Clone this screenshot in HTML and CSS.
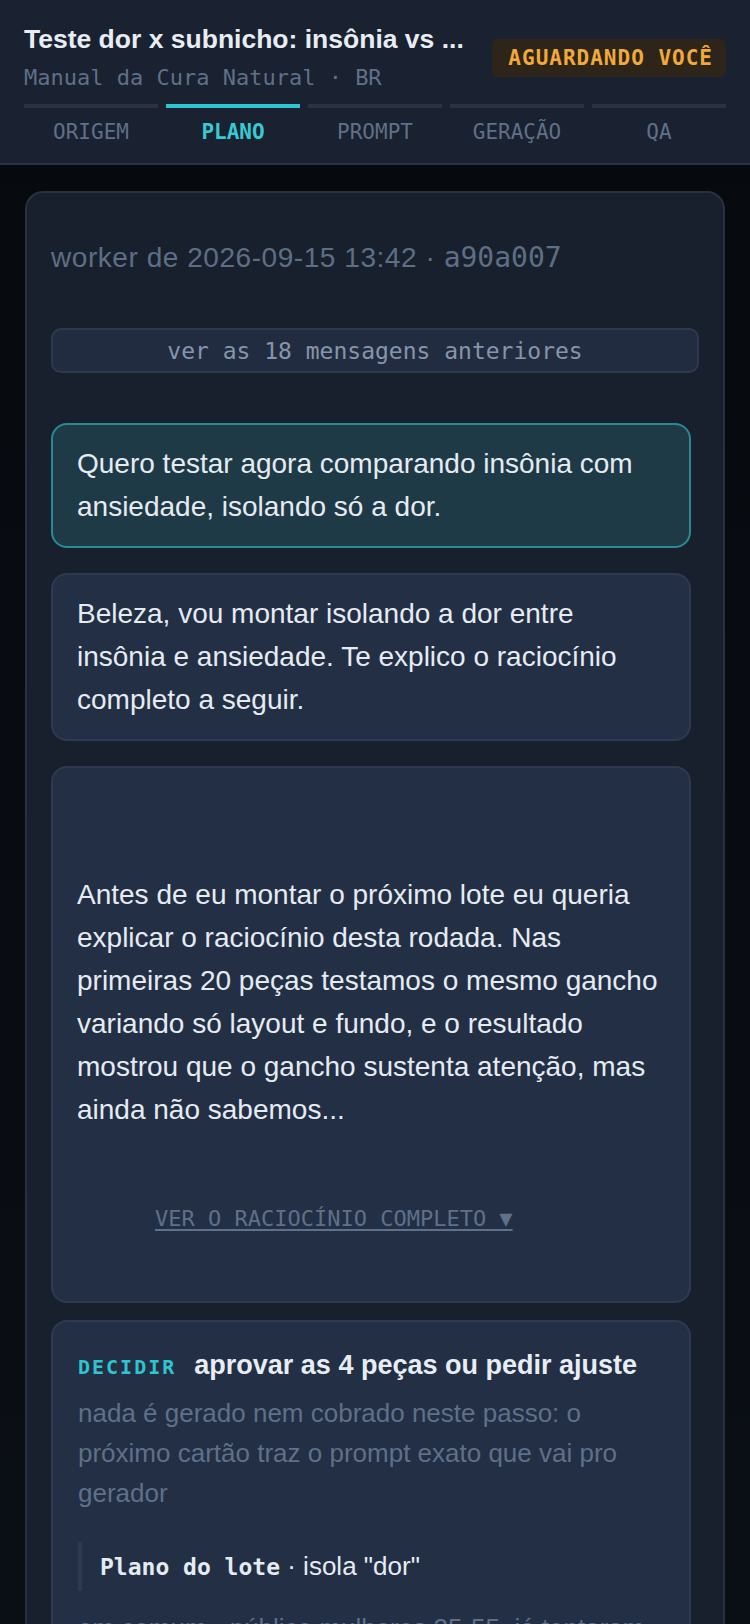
FILE: index.html
```html
<!DOCTYPE html>
<html lang="pt-BR">
<head>
  <meta charset="UTF-8">
  <title>Teste dor x subnicho</title>
  <link rel="stylesheet" href="styles.css">
</head>
<body>
  <header class="topbar">
    <div class="topbar-row">
      <div class="topbar-info">
        <h1 class="title">Teste dor x subnicho: insônia vs ...</h1>
        <div class="subtitle">Manual da Cura Natural · BR</div>
      </div>
      <span class="badge">AGUARDANDO VOCÊ</span>
    </div>
    <nav class="steps">
      <div class="step">
        <span class="step-bar"></span>
        <span class="step-label">ORIGEM</span>
      </div>
      <div class="step active">
        <span class="step-bar"></span>
        <span class="step-label">PLANO</span>
      </div>
      <div class="step">
        <span class="step-bar"></span>
        <span class="step-label">PROMPT</span>
      </div>
      <div class="step">
        <span class="step-bar"></span>
        <span class="step-label">GERAÇÃO</span>
      </div>
      <div class="step">
        <span class="step-bar"></span>
        <span class="step-label">QA</span>
      </div>
    </nav>
  </header>

  <main class="thread">
    <div class="thread-meta">worker de 2026-09-15 13:42 · <span class="mono">a90a007</span></div>

    <button class="older">ver as 18 mensagens anteriores</button>

    <div class="msg msg-user">
      Quero testar agora comparando insônia com ansiedade, isolando só a dor.
    </div>

    <div class="msg msg-bot">
      Beleza, vou montar isolando a dor entre insônia e ansiedade. Te explico o raciocínio completo a seguir.
    </div>

    <div class="msg msg-bot msg-long">
      <p>Antes de eu montar o próximo lote eu queria explicar o raciocínio desta rodada. Nas primeiras 20 peças testamos o mesmo gancho variando só layout e fundo, e o resultado mostrou que o gancho sustenta atenção, mas ainda não sabemos...</p>
      <a class="more" href="#">VER O RACIOCÍNIO COMPLETO ▼</a>
    </div>

    <div class="msg msg-bot msg-decide">
      <div class="decide-head">
        <span class="decide-tag">DECIDIR</span>
        <span class="decide-title">aprovar as 4 peças ou pedir ajuste</span>
      </div>
      <p class="decide-note">nada é gerado nem cobrado neste passo: o próximo cartão traz o prompt exato que vai pro gerador</p>
      <div class="plan">
        <strong class="mono">Plano do lote</strong> · isola "dor"
      </div>
      <p class="decide-note decide-more">em comum · público mulheres 35-55, já tentaram chá e remédio, linguagem simples</p>
    </div>
  </main>
</body>
</html>
```

FILE: styles.css
```css
body {
  margin: 0;
  background: linear-gradient(#06090e, #0b0f16);
  font-family: "Liberation Sans", Arial, sans-serif;
  color: #e6ebf2;
  min-height: 1624px;
}

.mono {
  font-family: "DejaVu Sans Mono", "Liberation Mono", monospace;
  letter-spacing: 0;
}

/* top bar */
.topbar {
  background-color: #1a2130;
  border-bottom: 2px solid #2b3340;
  padding: 23px 24px 16px;
}

.topbar-row {
  display: flex;
  align-items: center;
  justify-content: space-between;
  gap: 16px;
}

.title {
  margin: 0;
  font-size: 26.5px;
  line-height: 32px;
  font-weight: bold;
  color: #e8edf4;
  white-space: nowrap;
}

.subtitle {
  margin-top: 8px;
  font-family: "DejaVu Sans Mono", monospace;
  font-size: 22px;
  line-height: 30px;
  color: #5f7088;
}

.badge {
  flex-shrink: 0;
  background-color: #2d2519;
  color: #f2a93b;
  font-family: "DejaVu Sans Mono", monospace;
  font-weight: bold;
  font-size: 21px;
  letter-spacing: 1px;
  line-height: 38px;
  padding: 0 13px 0 16px;
  border-radius: 6px;
}

.steps {
  display: grid;
  grid-template-columns: repeat(5, 1fr);
  gap: 8px;
  margin-top: 11px;
}

.step {
  display: flex;
  flex-direction: column;
  align-items: center;
}

.step-bar {
  display: block;
  width: 100%;
  height: 4px;
  background-color: #2a3342;
}

.step-label {
  margin-top: 9px;
  font-family: "DejaVu Sans Mono", monospace;
  font-size: 21px;
  line-height: 30px;
  color: #5f7088;
}

.step.active .step-bar {
  background-color: #2ec4d0;
}

.step.active .step-label {
  color: #38c9d3;
  font-weight: bold;
}

/* conversation card */
.thread {
  margin: 26px 25px 0;
  background-color: #19202d;
  border: 2px solid #29313f;
  border-bottom: none;
  border-radius: 18px 18px 0 0;
  padding: 45px 24px 40px;
}

.thread-meta {
  font-size: 28px;
  line-height: 40px;
  letter-spacing: 0.55px;
  color: #5d6e86;
}

.older {
  display: block;
  width: 100%;
  margin-top: 50px;
  height: 45px;
  background-color: #222c40;
  border: 2px solid #2e394d;
  border-radius: 10px;
  color: #8595ab;
  font-family: "DejaVu Sans Mono", monospace;
  font-size: 23px;
  cursor: pointer;
}

.msg {
  margin-right: 8px;
  padding: 17px 24px 18px;
  border-radius: 16px;
  font-size: 28px;
  line-height: 43px;
  color: #e6ebf2;
}

.msg-user {
  margin-top: 50px;
  background-color: #1e3a47;
  border: 2px solid #2a8a93;
}

.msg-bot {
  margin-top: 25px;
  background-color: #232f45;
  border: 2px solid #2d3a4f;
}

.msg p {
  margin: 0;
}

.msg-long {
  padding-top: 105px;
  padding-bottom: 63px;
}

.more {
  display: inline-block;
  margin: 73px 0 0 78px;
  font-family: "DejaVu Sans Mono", monospace;
  font-size: 22px;
  line-height: 30px;
  color: #5f7088;
  text-decoration: underline;
  text-decoration-thickness: 2px;
  text-underline-offset: 3px;
}

.msg-decide {
  margin-top: 17px;
  padding: 23px 25px 18px;
}

.decide-head {
  display: flex;
  align-items: baseline;
  gap: 18px;
  line-height: 40px;
}

.decide-tag {
  font-family: "DejaVu Sans Mono", monospace;
  font-weight: bold;
  font-size: 20px;
  letter-spacing: 2px;
  color: #2fc4cf;
}

.decide-title {
  font-size: 27px;
  font-weight: bold;
  color: #e8edf4;
}

.msg .decide-note {
  margin-top: 6px;
  font-size: 26px;
  line-height: 40px;
  color: #5f7088;
}

.plan {
  margin-top: 29px;
  border-left: 4px solid #2f3a4c;
  padding-left: 18px;
  font-size: 26px;
  line-height: 48px;
  color: #e6ebf2;
}

.plan strong {
  font-size: 23px;
}

.msg .decide-more {
  margin-top: 17px;
}
```
